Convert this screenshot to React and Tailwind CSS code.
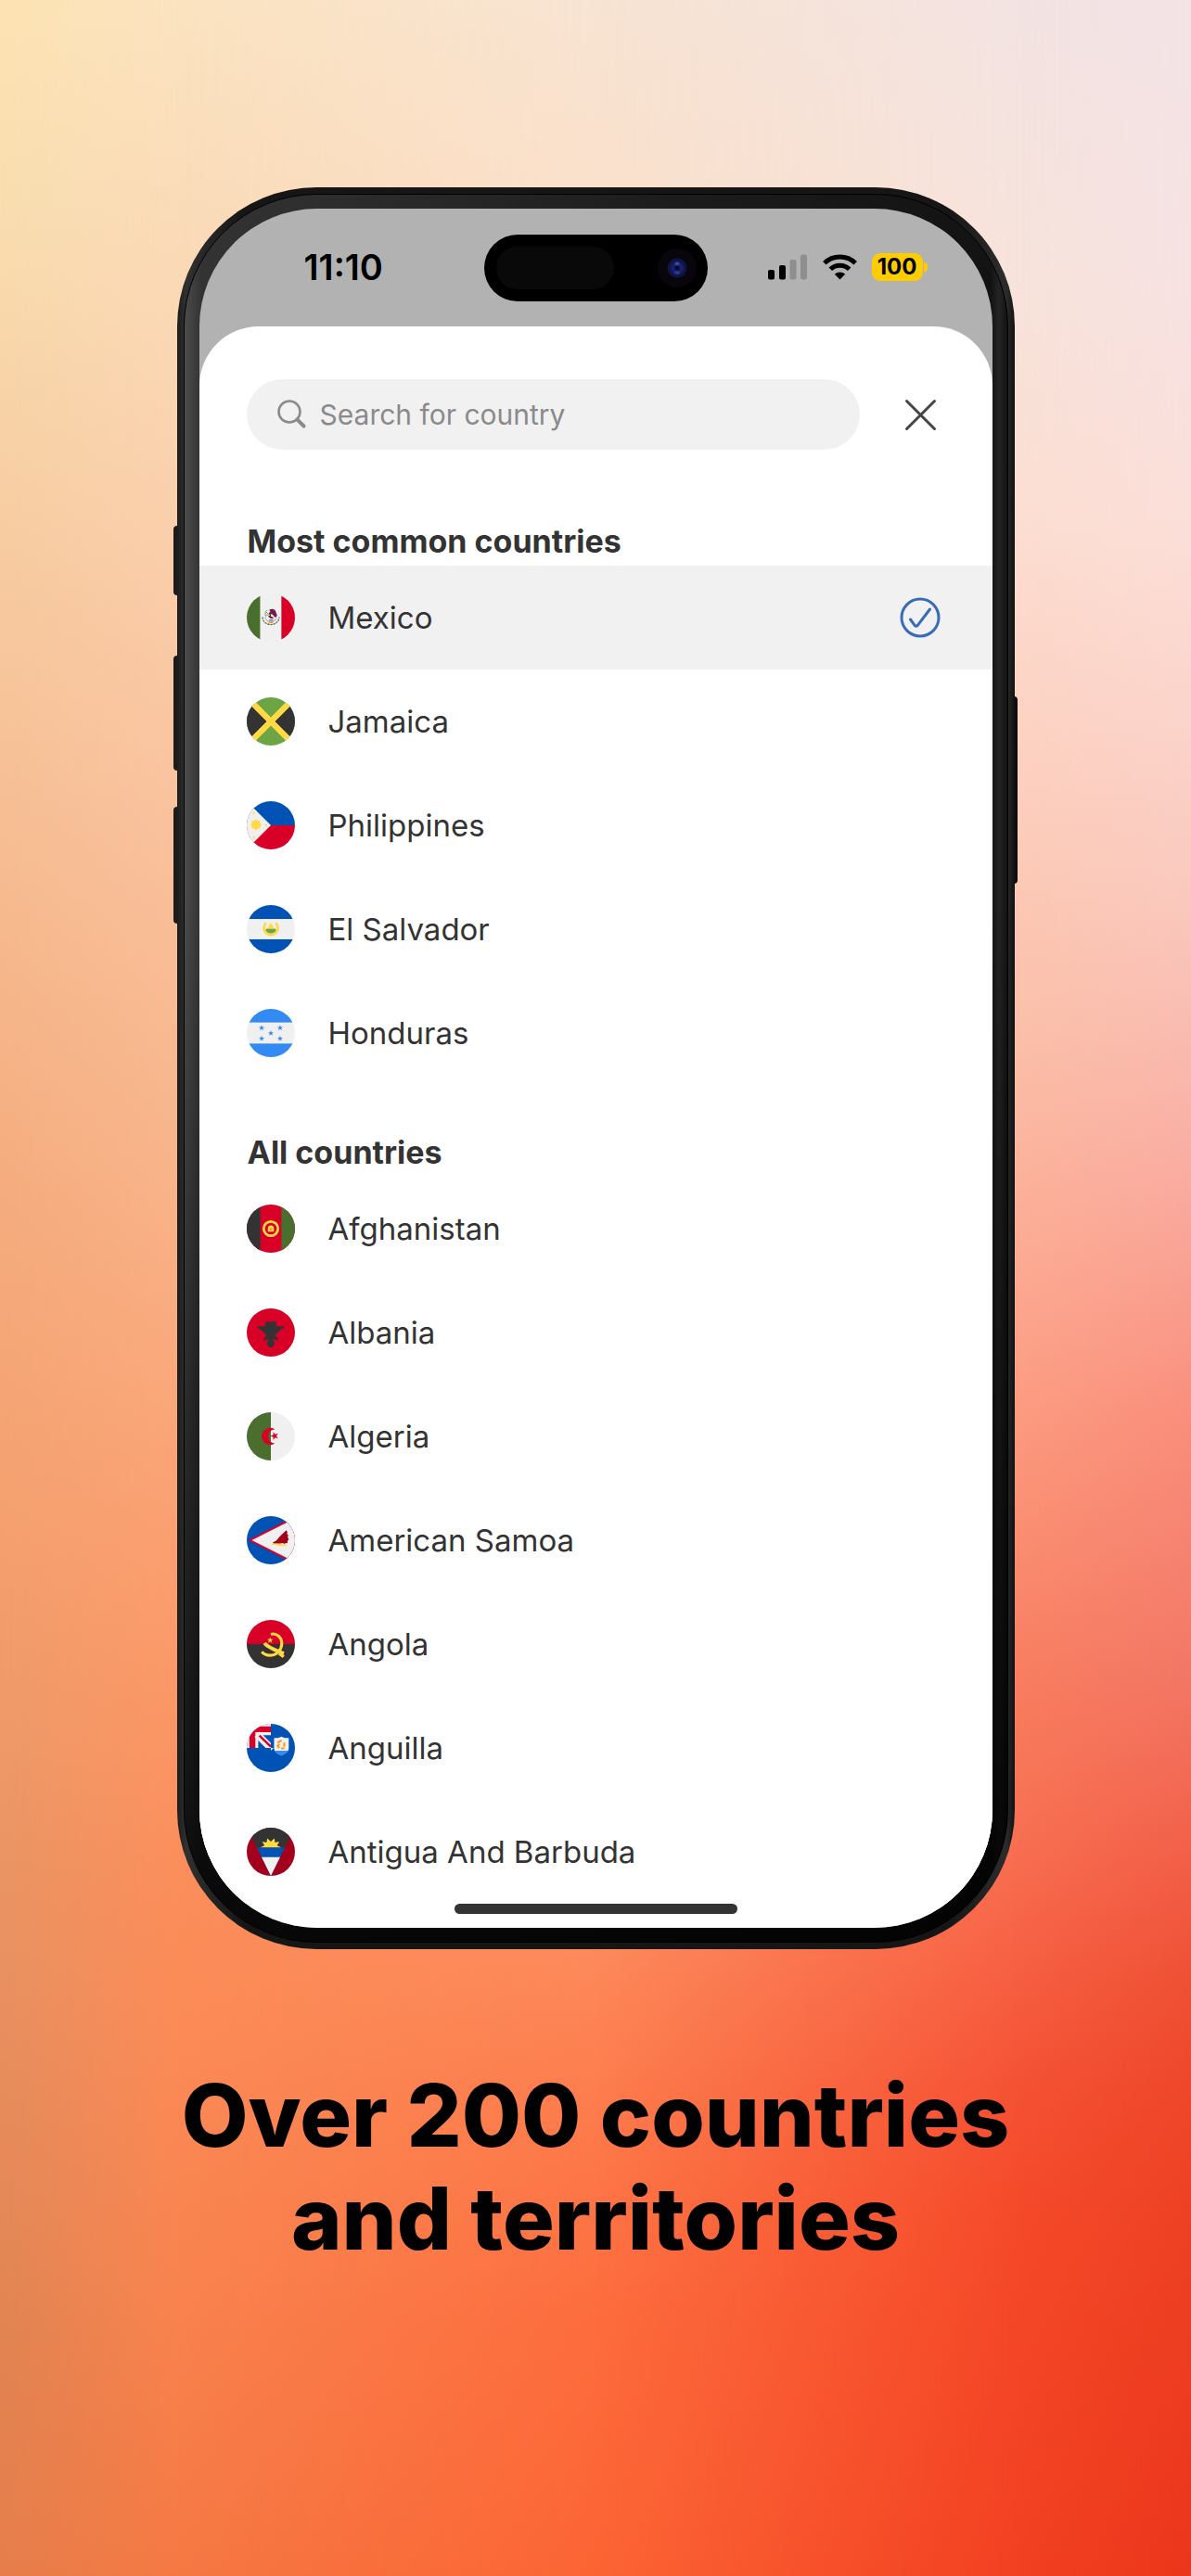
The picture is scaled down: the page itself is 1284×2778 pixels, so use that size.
import { useId, useState } from "react";

const star = "M0 -10 L2.4 -3.1 9.5 -3.1 3.8 1.2 5.9 8.1 0 3.9 -5.9 8.1 -3.8 1.2 -9.5 -3.1 -2.4 -3.1Z";

// every flag is drawn on a 512x512 board and clipped to a circle
const flags = {
  mx: (
    <>
      <rect width="512" height="512" fill="#f0f0f0" />
      <rect width="142" height="512" fill="#496e2d" />
      <rect x="368" width="144" height="512" fill="#d80027" />
      <path d="M168 252a88 78 0 0 0 176 0" fill="none" stroke="#496e2d" strokeWidth="12" strokeDasharray="22 9" />
      <path d="M196 258a60 46 0 0 0 118 6" fill="none" stroke="#751a46" strokeWidth="7" strokeDasharray="12 8" />
      <path d="M218 176c-22 14-28 44-16 68M204 196l26 22M206 236l32-14" fill="none" stroke="#6da544" strokeWidth="9" />
      <path d="M240 172c22-14 50-8 64 10l10 26 8 22-10 26-20-10-14 22-28-4-24-20 20-12-14-22 18-14z" fill="#751a46" />
      <path d="M254 216l22 8 20 26-12 6-26-12z" fill="#f0f0f0" />
      <path d="M236 276h46l-8 14h-32z" fill="#338af3" />
      <path d="M226 298h62l-14 16h-34z" fill="#ff9811" />
    </>
  ),
  jm: (
    <>
      <rect width="512" height="512" fill="#6da544" />
      <path d="M0 40L216 256 0 472zM512 40L296 256l216 216z" fill="#333" />
      <path d="M60 60L452 452M452 60L60 452" stroke="#ffda44" strokeWidth="62" />
    </>
  ),
  ph: (
    <>
      <rect width="512" height="256" fill="#0052b4" />
      <rect y="256" width="512" height="256" fill="#d80027" />
      <path d="M0 0L256 256 0 512z" fill="#f0f0f0" />
      <path d="M98 186l14 32 32-14-13 32 33 13-33 14 13 32-32-13-14 32-14-32-32 13 14-32-33-14 33-13-14-32 32 14z" fill="#ffda44" />
      <circle cx="98" cy="250" r="50" fill="#ffda44" />
      <path d={star} transform="translate(76 128) scale(1.9)" fill="#ffda44" />
      <path d={star} transform="translate(76 384) scale(1.9)" fill="#ffda44" />
      <path d={star} transform="translate(206 256) scale(1.9)" fill="#ffda44" />
    </>
  ),
  sv: (
    <>
      <rect width="512" height="512" fill="#f0f0f0" />
      <rect width="512" height="148" fill="#0052b4" />
      <rect y="364" width="512" height="148" fill="#0052b4" />
      <path d="M206 190a74 74 0 1 0 100 0" fill="none" stroke="#ffda44" strokeWidth="27" />
      <path d="M256 184l42 72h-84z" fill="#ffda44" />
      <path d="M200 254h112c0 62-112 62-112 0z" fill="#6da544" />
    </>
  ),
  hn: (
    <>
      <rect width="512" height="512" fill="#f0f0f0" />
      <rect width="512" height="144" fill="#338af3" />
      <rect y="368" width="512" height="144" fill="#338af3" />
      {[[158, 202], [354, 202], [256, 258], [158, 314], [354, 314]].map(([x, y]) => (
        <path key={`${x}-${y}`} d={star} transform={`translate(${x} ${y}) scale(3.2)`} fill="#338af3" />
      ))}
    </>
  ),
  af: (
    <>
      <rect width="512" height="512" fill="#d80027" />
      <rect width="144" height="512" fill="#333" />
      <rect x="368" width="144" height="512" fill="#496e2d" />
      <circle cx="256" cy="256" r="76" fill="none" stroke="#ffda44" strokeWidth="27" />
      <path d="M256 222c20 0 32 12 32 30v36h-64v-36c0-18 12-30 32-30z" fill="#ffda44" />
      <path d="M244 248h24v24h-24z" fill="#d80027" opacity=".3" />
    </>
  ),
  al: (
    <>
      <rect width="512" height="512" fill="#d80027" />
      <path d="M400 190h-96c6-6 14-12 14-24 0-18-14-28-32-28-12 0-22 4-30 10-8-6-18-10-30-10-18 0-32 10-32 28 0 12 8 18 14 24H112c0 18 16 28 32 28h4c0 16 14 26 30 26 0 12 8 22 22 24l10 16-34 40 16 16 34-14 4 12-18 40 30 38 14-6 14 6 30-38-18-40 4-12 32 14 16-16-34-40 12-16c14-2 22-12 22-24 16 0 30-10 30-26h4c16 0 32-10 32-28z" fill="#333" />
    </>
  ),
  dz: (
    <>
      <rect width="512" height="512" fill="#f0f0f0" />
      <rect width="256" height="512" fill="#496e2d" />
      <path d="M300 182a90 90 0 1 0 0 148 72 72 0 1 1 0-148z" fill="#d80027" />
      <path d={star} transform="translate(296 252) rotate(-18) scale(4.6)" fill="#d80027" />
    </>
  ),
  as: (
    <>
      <rect width="512" height="512" fill="#0052b4" />
      <path d="M14 256L512 0V512z" fill="#d80027" />
      <path d="M54 256L512 24V488z" fill="#f0f0f0" />
      <path d="M420 150l12 20-6 20 14 8-4 26 10 30-12 4-2 30-20-2-8 10-24-10-34 6-56 2-14-16 34-14 20-22 18-22 30-30z" fill="#a2001d" />
      <path d="M262 290h70l40 8h50v20h-80l-30-12h-50z" fill="#ffda44" />
    </>
  ),
  ao: (
    <>
      <rect width="512" height="256" fill="#d80027" />
      <rect y="256" width="512" height="256" fill="#333" />
      <path d="M256 152c60-18 116 32 116 96 0 74-56 128-130 128-36 0-62-14-82-38" fill="none" stroke="#ffda44" strokeWidth="31" />
      <path d="M188 246c38 52 118 76 206 110" fill="none" stroke="#ffda44" strokeWidth="38" />
      <path d="M344 356l48 34" fill="none" stroke="#ffda44" strokeWidth="34" />
      <path d={star} transform="translate(248 216) scale(3.5)" fill="#ffda44" />
    </>
  ),
  ai: (
    <>
      <rect width="512" height="512" fill="#0052b4" />
      <rect width="256" height="256" fill="#f0f0f0" />
      <path d="M0 28h256v60H92v168H28V28z" fill="#d80027" />
      <path d="M122 256V120h134v136z" fill="#0052b4" />
      <path d="M110 110L270 270" stroke="#f0f0f0" strokeWidth="76" />
      <path d="M256 256v60h-60l-60-60z" fill="#0052b4" />
      <path d="M256 256h60V120h-60z" fill="#0052b4" />
      <path d="M134 124l122 118" stroke="#d80027" strokeWidth="24" />
      <path d="M290 150c26 2 54 0 78-14 24 14 52 16 78 14v108c0 40-40 62-78 76-38-14-78-36-78-76z" fill="#f0f0f0" />
      <path d="M298 286h142c-14 26-44 40-72 50-28-10-58-24-70-50z" fill="#338af3" />
      <path d="M326 200l44-24M322 224l22 34M366 260h34M398 200v44M350 216l-16 10" fill="none" stroke="#ff9811" strokeWidth="20" />
    </>
  ),
  ag: (
    <>
      <rect width="512" height="512" fill="#a2001d" />
      <path d="M34 60L256 512 478 60V0H34z" fill="#333" />
      <path d="M108 212L256 512 404 212z" fill="#0052b4" />
      <path d="M158 312L256 512 354 312z" fill="#f0f0f0" />
      <path d="M366 210l-44-20 24-42-46 10-6-46-38 36-38-36-8 46-46-10 24 42-44 20z" fill="#ffda44" />
    </>
  ),
};

const common = [
  { code: "mx", name: "Mexico" },
  { code: "jm", name: "Jamaica" },
  { code: "ph", name: "Philippines" },
  { code: "sv", name: "El Salvador" },
  { code: "hn", name: "Honduras" },
];

const all = [
  { code: "af", name: "Afghanistan" },
  { code: "al", name: "Albania" },
  { code: "dz", name: "Algeria" },
  { code: "as", name: "American Samoa" },
  { code: "ao", name: "Angola" },
  { code: "ai", name: "Anguilla" },
  { code: "ag", name: "Antigua And Barbuda" },
];

function Flag({ code }) {
  const id = useId();
  return (
    <svg className="size-[52px] shrink-0" viewBox="0 0 512 512" aria-hidden="true">
      <clipPath id={id}>
        <circle cx="256" cy="256" r="256" />
      </clipPath>
      <g clipPath={`url(#${id})`}>{flags[code]}</g>
    </svg>
  );
}

function CountryRow({ country, selected, onSelect }) {
  return (
    <li>
      <button
        type="button"
        aria-pressed={selected}
        onClick={() => onSelect(country.code)}
        className={`flex h-28 w-full items-center gap-9 pl-[51px] pr-14 text-left ${selected ? "bg-[#f1f1f1]" : "bg-white"}`}
      >
        <Flag code={country.code} />
        <span className="grow text-[33px] leading-10 text-[#333]">{country.name}</span>
        {selected && (
          <svg className="size-11" viewBox="0 0 44 44" fill="none" stroke="#3a6bbb" strokeWidth="3" strokeLinecap="round" strokeLinejoin="round" aria-hidden="true">
            <circle cx="22" cy="22" r="20" />
            <path d="M11.500 24l4.800 6.600q1.400 1.400 2.800 0L32.500 13" />
          </svg>
        )}
      </button>
    </li>
  );
}

function StatusBar() {
  return (
    <div className="grid h-[127px] grid-cols-[1fr_auto_1fr] items-start pt-7">
      <div className="pl-[113px] pt-3 text-[38px] font-semibold leading-[46px] text-black">11:10</div>
      {/* Dynamic island */}
      <div className="flex h-[72px] w-[241px] items-center justify-between rounded-full bg-black pl-[13px] pr-3">
        <div className="h-[46px] w-[127px] rounded-full bg-[#090909]" />
        <div className="flex size-[42px] items-center justify-center rounded-full bg-[#08060c]">
          <svg className="size-[22px]" viewBox="0 0 22 22" aria-hidden="true">
            <circle cx="11" cy="11" r="10.500" fill="#10153f" />
            <circle cx="11" cy="11" r="7" fill="#161f6b" />
            <ellipse cx="11" cy="6.500" rx="2.600" ry="2" fill="#3848a0" />
            <circle cx="11" cy="11" r="2.500" fill="#070a26" />
            <ellipse cx="11" cy="16" rx="3" ry="1.800" fill="#2a3890" />
          </svg>
        </div>
      </div>
      <div className="flex items-center justify-end gap-4 pr-[70px] pt-5">
        <svg className="h-7 w-[43px]" viewBox="0 0 43 28" aria-hidden="true">
          <rect x="0" y="17" width="7" height="10.500" rx="2" />
          <rect x="12" y="12" width="7" height="15.500" rx="2" />
          <rect x="23.500" y="6" width="7" height="21.500" rx="2" fill="#8e8e8e" />
          <rect x="35" y="0.500" width="7" height="27" rx="2" fill="#8e8e8e" />
        </svg>
        <svg className="h-7 w-[37px]" viewBox="0 0 37 28" fill="none" stroke="#000" strokeWidth="5" aria-hidden="true">
          <path d="M1.800 9.800C11 .8 26 .8 35.200 9.800" />
          <path d="M8.300 16.200c5.600-5.400 14.800-5.400 20.400 0" />
          <path d="M18.500 27.500l-5.600-5.800c3.100-3 8.100-3 11.200 0z" fill="#000" stroke="none" />
        </svg>
        <div className="flex items-center gap-px">
          <div className="flex h-[30px] w-[55px] items-center justify-center rounded-[9px] bg-[#ffcc00] text-2xl font-bold leading-[30px] text-black">
            100
          </div>
          <div className="h-2.5 w-1 rounded-r-full bg-[#ffcc00]" />
        </div>
      </div>
    </div>
  );
}

function Section({ title, countries, selected, onSelect, headingClass }) {
  return (
    <section>
      <h2 className={`flex items-end pb-[6px] pl-[52px] text-[34px] font-bold leading-10 text-[#333] ${headingClass}`}>{title}</h2>
      <ul>
        {countries.map((country) => (
          <CountryRow key={country.code} country={country} selected={country.code === selected} onSelect={onSelect} />
        ))}
      </ul>
    </section>
  );
}

export default function App() {
  const [selected, setSelected] = useState("mx");
  const [query, setQuery] = useState("");
  const matches = (c) => c.name.toLowerCase().includes(query.toLowerCase());

  return (
    <div className="relative isolate min-h-screen overflow-hidden font-['Inter',sans-serif]">
      {/* Backdrop: vertical gradients blended into each other from left to right */}
      <div aria-hidden="true" className="absolute inset-0 -z-10 bg-[linear-gradient(#fde3b3,#f9deb0_8%,#f8d4a8_15%,#f7c096_30%,#f5ae80_45%,#f59f6e_60%,#ec9766_70%,#e68c5c_82%,#e18553_90%,#e67e4b)]" />
      <div aria-hidden="true" className="absolute inset-0 -z-10 bg-[linear-gradient(#fbe3c0,#fad5b2_15%,#f9c4a0_30%,#f8b48a_45%,#fb9f70_60%,#fb8f5c_72%,#fb8b57_78%,#f98450_88%,#f57843)] [mask-image:linear-gradient(to_right,transparent,black_15%)]" />
      <div aria-hidden="true" className="absolute inset-0 -z-10 bg-[linear-gradient(#f8e4d3,#fae0cb_8%,#fbc8a8_35%,#fca982_60%,#fd895a_76%,#fd7b4c_82%,#fd6c3d_90%,#fc6434)] [mask-image:linear-gradient(to_right,transparent_15%,black_50%)]" />
      <div aria-hidden="true" className="absolute inset-0 -z-10 bg-[linear-gradient(#f3e3e2,#f8e3da_12%,#fcded2_20%,#fdd0bf_30%,#fbc0a9_40%,#fda890_50%,#fb9376_58%,#f97e60_65%,#f87153_71%,#f76144_76%,#f55234_81%,#f54a2a_86%,#f24022)] [mask-image:linear-gradient(to_right,transparent_50%,black_85%)]" />
      <div aria-hidden="true" className="absolute inset-0 -z-10 bg-[linear-gradient(#f3e3e5,#f6e2e3_10%,#fbdfd9_20%,#fbd8d0_25%,#fac8bd_35%,#f9aea3_45%,#f98e7c_55%,#f27765_65%,#f25f48_72%,#ee5034_77%,#ee4528_82%,#ed3f22_88%,#eb361b)] [mask-image:linear-gradient(to_right,transparent_85%,black)]" />

      <main className="flex flex-col items-center pt-[202px] pb-72">
        {/* Phone */}
        <div className="relative w-full max-w-[903px]">
          {/* Side keys */}
          <div className="absolute -left-1 top-[365px] h-[75px] w-2 rounded-l-sm bg-[#1c1c1c]" />
          <div className="absolute -left-1 top-[505px] h-[124px] w-2 rounded-l-sm bg-[#1c1c1c]" />
          <div className="absolute -left-1 top-[668px] h-[126px] w-2 rounded-l-sm bg-[#1c1c1c]" />
          <div className="absolute -right-[3px] top-[549px] h-[202px] w-2 rounded-r-sm bg-[#0c0c0c]" />

          <div className="relative rounded-[150px] bg-[linear-gradient(to_right,#1c1c1c,#303030_1%,#161616_8%,#161616_92%,#2c2c2c_99%,#111)] p-[7px]">
            <div className="rounded-[143px] border border-black bg-[linear-gradient(transparent_40%,rgb(0_0_0/0.85)),linear-gradient(to_right,#4c4c4c,#333_2%,#282828_30%,#1c1c1c_60%,#131313_98%,#242424_99%,#121212)] px-4 py-[15px]">
              <div className="overflow-hidden rounded-[127px] bg-[#b2b2b2]">
                <StatusBar />
                <div className="rounded-t-[64px] bg-white pt-[57px]">
                  <div className="flex items-center pl-[51px] pr-[60px]">
                    <div className="flex h-[76px] grow items-center gap-3.5 rounded-full bg-[#f1f1f1] px-[33px]">
                      <svg className="size-8 shrink-0" viewBox="0 0 32 32" fill="none" stroke="#8a8a8d" aria-hidden="true">
                        <circle cx="13" cy="13" r="11.500" strokeWidth="2.600" />
                        <path d="M21.300 21.300L28.500 28.500" strokeWidth="4" strokeLinecap="round" />
                      </svg>
                      <input
                        type="text"
                        aria-label="Search for country"
                        value={query}
                        onChange={(e) => setQuery(e.target.value)}
                        placeholder="Search for country"
                        className="w-full bg-transparent text-3xl leading-9 text-[#333] outline-none placeholder:text-[#8a8a8d]"
                      />
                    </div>
                    <button type="button" aria-label="Close" className="ml-[47px]">
                      <svg className="size-9" viewBox="0 0 36 36" fill="none" stroke="#444" strokeWidth="3" strokeLinecap="round" aria-hidden="true">
                        <path d="M3.500 3.500l30 30M33.500 3.500l-30 30" />
                      </svg>
                    </button>
                  </div>

                  <Section title="Most common countries" headingClass="h-[125px]" countries={common.filter(matches)} selected={selected} onSelect={setSelected} />
                  <Section title="All countries" headingClass="h-[99px]" countries={all.filter(matches)} selected={selected} onSelect={setSelected} />

                  {/* Home indicator */}
                  <div className="flex justify-center pb-[15px]">
                    <div className="h-[11px] w-[305px] rounded-full bg-[#333]" />
                  </div>
                </div>
              </div>
            </div>
          </div>
        </div>

        <h1 className="mt-[124px] max-w-[1000px] text-center text-[93px] font-extrabold leading-[111px] text-black">
          Over 200 countries
          <br />
          and territories
        </h1>
      </main>
    </div>
  );
}
